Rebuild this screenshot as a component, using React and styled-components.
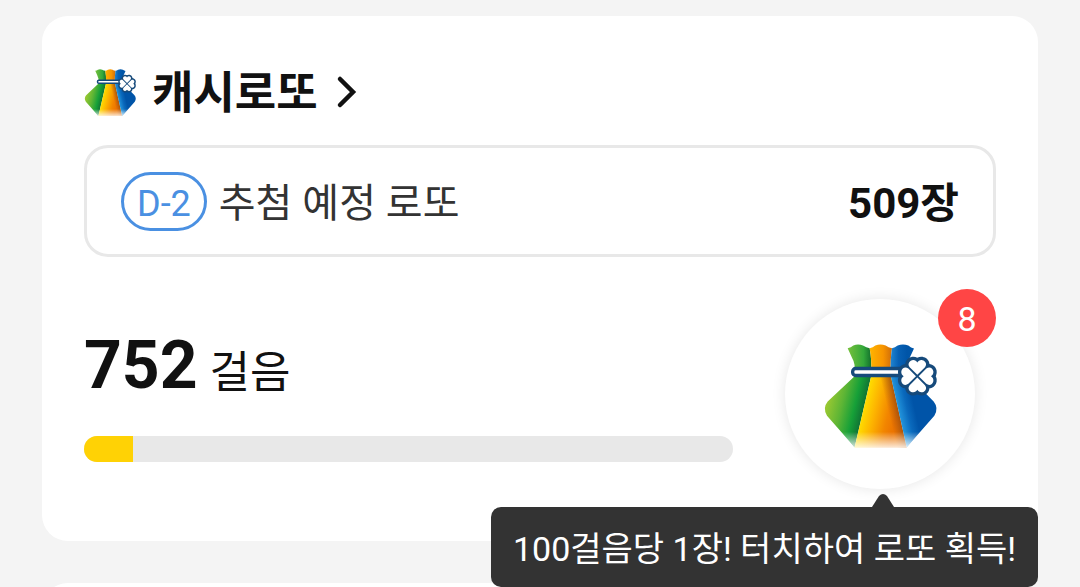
import React, { useId } from "react"
import styled, { createGlobalStyle } from "styled-components"

const colors = {
  PAGE: "#f4f4f4",
  BLACK: "#111111",
  TEXT: "#333333",
  LINE: "#e8e8e8",
  BLUE: "#4a90e2",
  RED: "#ff4545",
  YELLOW: "#ffd205",
  NAVY: "#164a7b",
}

const GlobalStyle = createGlobalStyle`
  * {
    box-sizing: border-box;
  }
  body {
    margin: 0;
    background: ${colors.PAGE};
    color: ${colors.BLACK};
    font-family: Roboto, "Noto Sans CJK KR", sans-serif;
  }
  button {
    font-family: inherit;
  }
`

const Page = styled.main`
  display: flex;
  flex-direction: column;
  gap: 42px;
  height: 100vh;
  overflow: hidden;
  padding: 16px 42px 0;
`

const Card = styled.section`
  position: relative;
  flex-shrink: 0;
  min-height: 120px;
  padding: 42px 42px 52px;
  background: white;
  border-radius: 26px;
`

const TitleLink = styled.a`
  display: inline-flex;
  align-items: center;
  height: 68px;
  color: inherit;
  text-decoration: none;
`

const Title = styled.h1`
  margin: 0 18px 0 16px;
  padding-top: 4px;
  font-size: 45px;
  line-height: 64px;
  font-weight: 700;
`

const DrawBox = styled.div`
  display: flex;
  align-items: center;
  height: 112px;
  margin-top: 19px;
  padding: 0 34px;
  border: 3px solid ${colors.LINE};
  border-radius: 24px;
`

const DayPill = styled.span`
  padding: 5px 13px 0;
  border: 3px solid ${colors.BLUE};
  border-radius: 30px;
  color: ${colors.BLUE};
  font-size: 36px;
  line-height: 48px;
`

const DrawLabel = styled.span`
  flex: 1;
  margin-left: 12px;
  padding-top: 6px;
  color: ${colors.TEXT};
  font-size: 40px;
  line-height: 60px;
`

const DrawCount = styled.strong`
  padding-top: 5px;
  font-size: 42px;
  line-height: 60px;
  font-weight: 700;
`

const StepRow = styled.div`
  display: flex;
  align-items: center;
  gap: 52px;
  margin-top: 42px;
  padding-right: 21px;
`

const StepInfo = styled.div`
  flex: 1;
`

const StepCount = styled.p`
  margin: 0 0 30px;
  font-size: 66px;
  line-height: 80px;
  font-weight: 700;
`

const StepUnit = styled.span`
  margin-left: 12px;
  font-size: 44px;
  line-height: 44px;
  font-weight: 400;
`

const Track = styled.div`
  height: 26px;
  overflow: hidden;
  background: ${colors.LINE};
  border-radius: 13px;
`

const Fill = styled.div`
  height: 100%;
  background: ${colors.YELLOW};
`

const BagButton = styled.button`
  position: relative;
  display: flex;
  align-items: center;
  justify-content: center;
  width: 190px;
  height: 190px;
  padding: 0;
  border: none;
  border-radius: 50%;
  background: white;
  box-shadow: 0 0 14px rgba(0, 0, 0, 0.1);
  cursor: pointer;
`

const Badge = styled.span`
  position: absolute;
  top: -10px;
  right: -21px;
  width: 58px;
  height: 58px;
  border-radius: 50%;
  background: ${colors.RED};
  color: white;
  font-size: 34px;
  line-height: 60px;
  text-align: center;
`

const Tooltip = styled.div`
  position: absolute;
  right: 0;
  bottom: -46px;
  padding: 4px 22px 0;
  border-radius: 10px;
  background: ${colors.TEXT};
  color: white;
  font-size: 34px;
  line-height: 76px;
  white-space: nowrap;
`

const TooltipArrow = styled.svg`
  position: absolute;
  right: 144px;
  bottom: 100%;
`

/* the tooltip hangs below its card, so that card stays above the next one */
const LottoCard = styled(Card)`
  z-index: 1;
`

const BagIcon = styled.svg`
  overflow: visible;
`

const LEAF =
  "M0 -4 L-23 -27 C-30 -36 -25 -46 -15 -48 C-8 -49 -3 -46 0 -41 C3 -46 8 -49 15 -48 C25 -46 30 -36 23 -27 Z"

const LuckyBag = ({ width, height }) => {
  const id = useId()
  const ref = name => `url(#${id}${name})`
  return (
    <BagIcon width={width} height={height} viewBox="68 65 342 314" aria-hidden="true">
      <defs>
        <linearGradient id={`${id}greenTop`} x1="145" x2="213" y1="100" y2="100" gradientUnits="userSpaceOnUse">
          <stop offset="0" stopColor="#72bf3c" />
          <stop offset="0.65" stopColor="#34a83a" />
          <stop offset="1" stopColor="#126f2d" />
        </linearGradient>
        <linearGradient id={`${id}green`} x1="80" y1="250" x2="187" y2="275" gradientUnits="userSpaceOnUse">
          <stop offset="0" stopColor="#98c832" />
          <stop offset="0.4" stopColor="#5db535" />
          <stop offset="0.75" stopColor="#16a038" />
          <stop offset="1" stopColor="#117434" />
        </linearGradient>
        <linearGradient id={`${id}orangeTop`} x1="208" x2="275" y1="100" y2="100" gradientUnits="userSpaceOnUse">
          <stop offset="0" stopColor="#ffb500" />
          <stop offset="0.6" stopColor="#f79400" />
          <stop offset="1" stopColor="#cf6d0a" />
        </linearGradient>
        <linearGradient id={`${id}orange`} x1="188" y1="272" x2="285" y2="295" gradientUnits="userSpaceOnUse">
          <stop offset="0" stopColor="#ffdc00" />
          <stop offset="0.35" stopColor="#fdb300" />
          <stop offset="0.75" stopColor="#f28500" />
          <stop offset="1" stopColor="#ec7500" />
        </linearGradient>
        <linearGradient id={`${id}fold`} x1="266" y1="282" x2="295" y2="275" gradientUnits="userSpaceOnUse">
          <stop offset="0" stopColor="#a0490f" stopOpacity="0" />
          <stop offset="1" stopColor="#8a430f" stopOpacity="0.65" />
        </linearGradient>
        <linearGradient id={`${id}blueTop`} x1="270" x2="320" y1="100" y2="100" gradientUnits="userSpaceOnUse">
          <stop offset="0" stopColor="#2086d2" />
          <stop offset="0.5" stopColor="#0760b4" />
          <stop offset="1" stopColor="#0055a8" />
        </linearGradient>
        <linearGradient id={`${id}blue`} x1="295" y1="275" x2="343" y2="264" gradientUnits="userSpaceOnUse">
          <stop offset="0" stopColor="#2396dd" />
          <stop offset="0.55" stopColor="#0a69bc" />
          <stop offset="1" stopColor="#0054a8" />
        </linearGradient>
        <linearGradient id={`${id}fade`} x1="0" x2="0" y1="334" y2="382" gradientUnits="userSpaceOnUse">
          <stop offset="0" stopColor="white" stopOpacity="0" />
          <stop offset="1" stopColor="white" stopOpacity="0.85" />
        </linearGradient>
      </defs>
      <path d="M142 83 Q152 81 159 75 Q173 69 188 75 Q198 82 208 83 Q214 115 213 156 H160 Q168 134 155 112 Z" fill={ref("greenTop")} />
      <path d="M208 83 Q218 81 225 75 Q240 69 256 75 Q264 82 275 83 Q270 115 271 156 H213 Q214 115 208 83 Z" fill={ref("orangeTop")} />
      <path d="M275 83 Q284 81 292 75 Q308 69 324 75 Q332 82 341 84 L326 116 V156 H271 Q270 115 275 83 Z" fill={ref("blueTop")} />
      <path d="M162 154 V168 L82 243 Q66 263 80 286 L163 380 L213 165 V154 Z" fill={ref("green")} />
      <path d="M213 154 V165 L163 380 H319 L271 165 V154 Z" fill={ref("orange")} />
      <path d="M213 154 V165 L163 380 H319 L271 165 V154 Z" fill={ref("fold")} />
      <path d="M271 154 V165 L319 380 L402 286 Q416 263 400 243 L326 168 V154 Z" fill={ref("blue")} />
      <path d="M118 329 H364 L319 381 H163 Z" fill={ref("fade")} />
      <rect x="157" y="144" width="150" height="21" rx="9" fill="white" stroke={colors.NAVY} strokeWidth="10" />
      <g transform="translate(351 167)">
        {[0, 90, 180, 270].map(angle => (
          <path key={angle} d={LEAF} transform={`rotate(${angle})`} fill={colors.NAVY} stroke={colors.NAVY} strokeWidth="20" strokeLinejoin="round" />
        ))}
        {[0, 90, 180, 270].map(angle => (
          <path key={angle} d={LEAF} transform={`rotate(${angle})`} fill="white" />
        ))}
      </g>
    </BagIcon>
  )
}

const Chevron = () => (
  <svg width="22" height="34" viewBox="0 0 22 34" fill="none" aria-hidden="true">
    <path d="M4 4 L17 17 L4 30" stroke={colors.BLACK} strokeWidth="4.5" strokeLinecap="round" strokeLinejoin="miter" />
  </svg>
)

const steps = 752
const dailyGoal = 10000

const App = () => (
  <Page>
    <GlobalStyle />
    <LottoCard>
      <TitleLink href="#lotto">
        <LuckyBag width={52} height={48} />
        <Title>캐시로또</Title>
        <Chevron />
      </TitleLink>
      <DrawBox>
        <DayPill>D-2</DayPill>
        <DrawLabel>추첨 예정 로또</DrawLabel>
        <DrawCount>509장</DrawCount>
      </DrawBox>
      <StepRow>
        <StepInfo>
          <StepCount>
            {steps}
            <StepUnit>걸음</StepUnit>
          </StepCount>
          <Track role="progressbar" aria-label="걸음" aria-valuenow={steps} aria-valuemax={dailyGoal}>
            <Fill style={{ width: `${(steps / dailyGoal) * 100}%` }} />
          </Track>
        </StepInfo>
        <BagButton type="button" aria-describedby="bag-tip">
          <LuckyBag width={114} height={105} />
          <Badge>8</Badge>
        </BagButton>
      </StepRow>
      <Tooltip id="bag-tip" role="tooltip">
        100걸음당 1장! 터치하여 로또 획득!
        <TooltipArrow width="22" height="13" viewBox="0 0 22 13" aria-hidden="true">
          <path d="M0 13 L7 2 Q11 -2 15 2 L22 13 Z" fill={colors.TEXT} />
        </TooltipArrow>
      </Tooltip>
    </LottoCard>
    <Card />
  </Page>
)

export default App
